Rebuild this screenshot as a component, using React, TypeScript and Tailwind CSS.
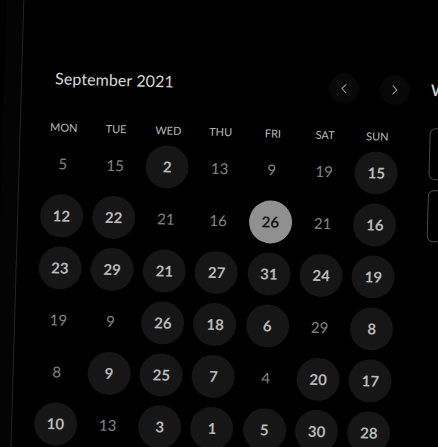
import { ChevronLeft, ChevronRight } from "lucide-react"

type Day = { n: number; bold?: boolean; active?: boolean }

const d = (n: number, bold = false, active = false): Day => ({ n, bold, active })

const weekdays = ["MON", "TUE", "WED", "THU", "FRI", "SAT", "SUN"]

const days: Day[] = [
  d(5), d(15), d(2, true), d(13), d(9), d(19), d(15, true),
  d(12, true), d(22, true), d(21), d(16), d(26, true, true), d(21), d(16, true),
  d(23, true), d(29, true), d(21, true), d(27, true), d(31, true), d(24, true), d(19, true),
  d(19), d(9), d(26, true), d(18, true), d(6, true), d(29), d(8, true),
  d(8), d(9, true), d(25, true), d(7, true), d(4), d(20, true), d(17, true),
  d(10, true), d(13), d(3, true), d(1, true), d(5, true), d(30, true), d(28, true),
]

function DayCell({ day }: { day: Day }) {
  if (day.active) {
    return (
      <div className="flex h-[52px] items-center justify-center">
        <div className="flex h-[43px] w-[43px] items-center justify-center rounded-full bg-[#909090] text-[15px] font-bold text-[#161616]">
          {day.n}
        </div>
      </div>
    )
  }
  if (day.bold) {
    return (
      <div className="flex h-[52px] items-center justify-center">
        <div className="flex h-[43px] w-[43px] items-center justify-center rounded-full bg-[#161616] text-[15px] font-bold text-[#bababa]">
          {day.n}
        </div>
      </div>
    )
  }
  return (
    <div className="flex h-[52px] items-center justify-center text-[15px] text-[#858585]">
      {day.n}
    </div>
  )
}

export default function App() {
  return (
    <div className="h-[447px] w-[438px] overflow-hidden bg-black font-['Lato',sans-serif]">
      <div className="flex h-[447px] w-[438px] rotate-[1.65deg]">
        <div className="-my-4 w-[18px] shrink-0 border-r border-[#242424] bg-[#040404]" />

        <div className="w-[390px] shrink-0 pl-[17px] pr-[2px] pt-[71px]">
          <div className="flex h-6 items-center">
            <h2 className="ml-4 text-[16px] tracking-[0.1px] text-[#d8d8d8]">September 2021</h2>
            <div className="ml-auto mt-1 flex items-center gap-[21px]">
              <button className="flex h-[30px] w-[30px] items-center justify-center rounded-full bg-[#080808] text-[#a0a0a0]">
                <ChevronLeft className="h-4 w-4" strokeWidth={1.5} />
              </button>
              <button className="flex h-[30px] w-[30px] items-center justify-center rounded-full bg-[#080808] text-[#a0a0a0]">
                <ChevronRight className="h-4 w-4" strokeWidth={1.5} />
              </button>
            </div>
          </div>

          <div className="mt-[27px] grid w-[366px] grid-cols-7">
            {weekdays.map((w) => (
              <div key={w} className="flex h-5 items-center justify-center text-[11px] text-[#bababa]">
                {w}
              </div>
            ))}
            {days.map((day, i) => (
              <DayCell key={i} day={day} />
            ))}
          </div>
        </div>

        <div className="min-w-0 flex-1 pl-[19px] pt-[72px]">
          <div className="flex h-6 items-center text-[16px] font-semibold text-[#d0d0d0]">W</div>
          <div className="mt-[26px] h-[52px] w-[120px] rounded-md border border-[#4a4a4a]" />
          <div className="mt-[10px] h-[52px] w-[120px] rounded-md border border-[#4a4a4a]" />
        </div>
      </div>
    </div>
  )
}
